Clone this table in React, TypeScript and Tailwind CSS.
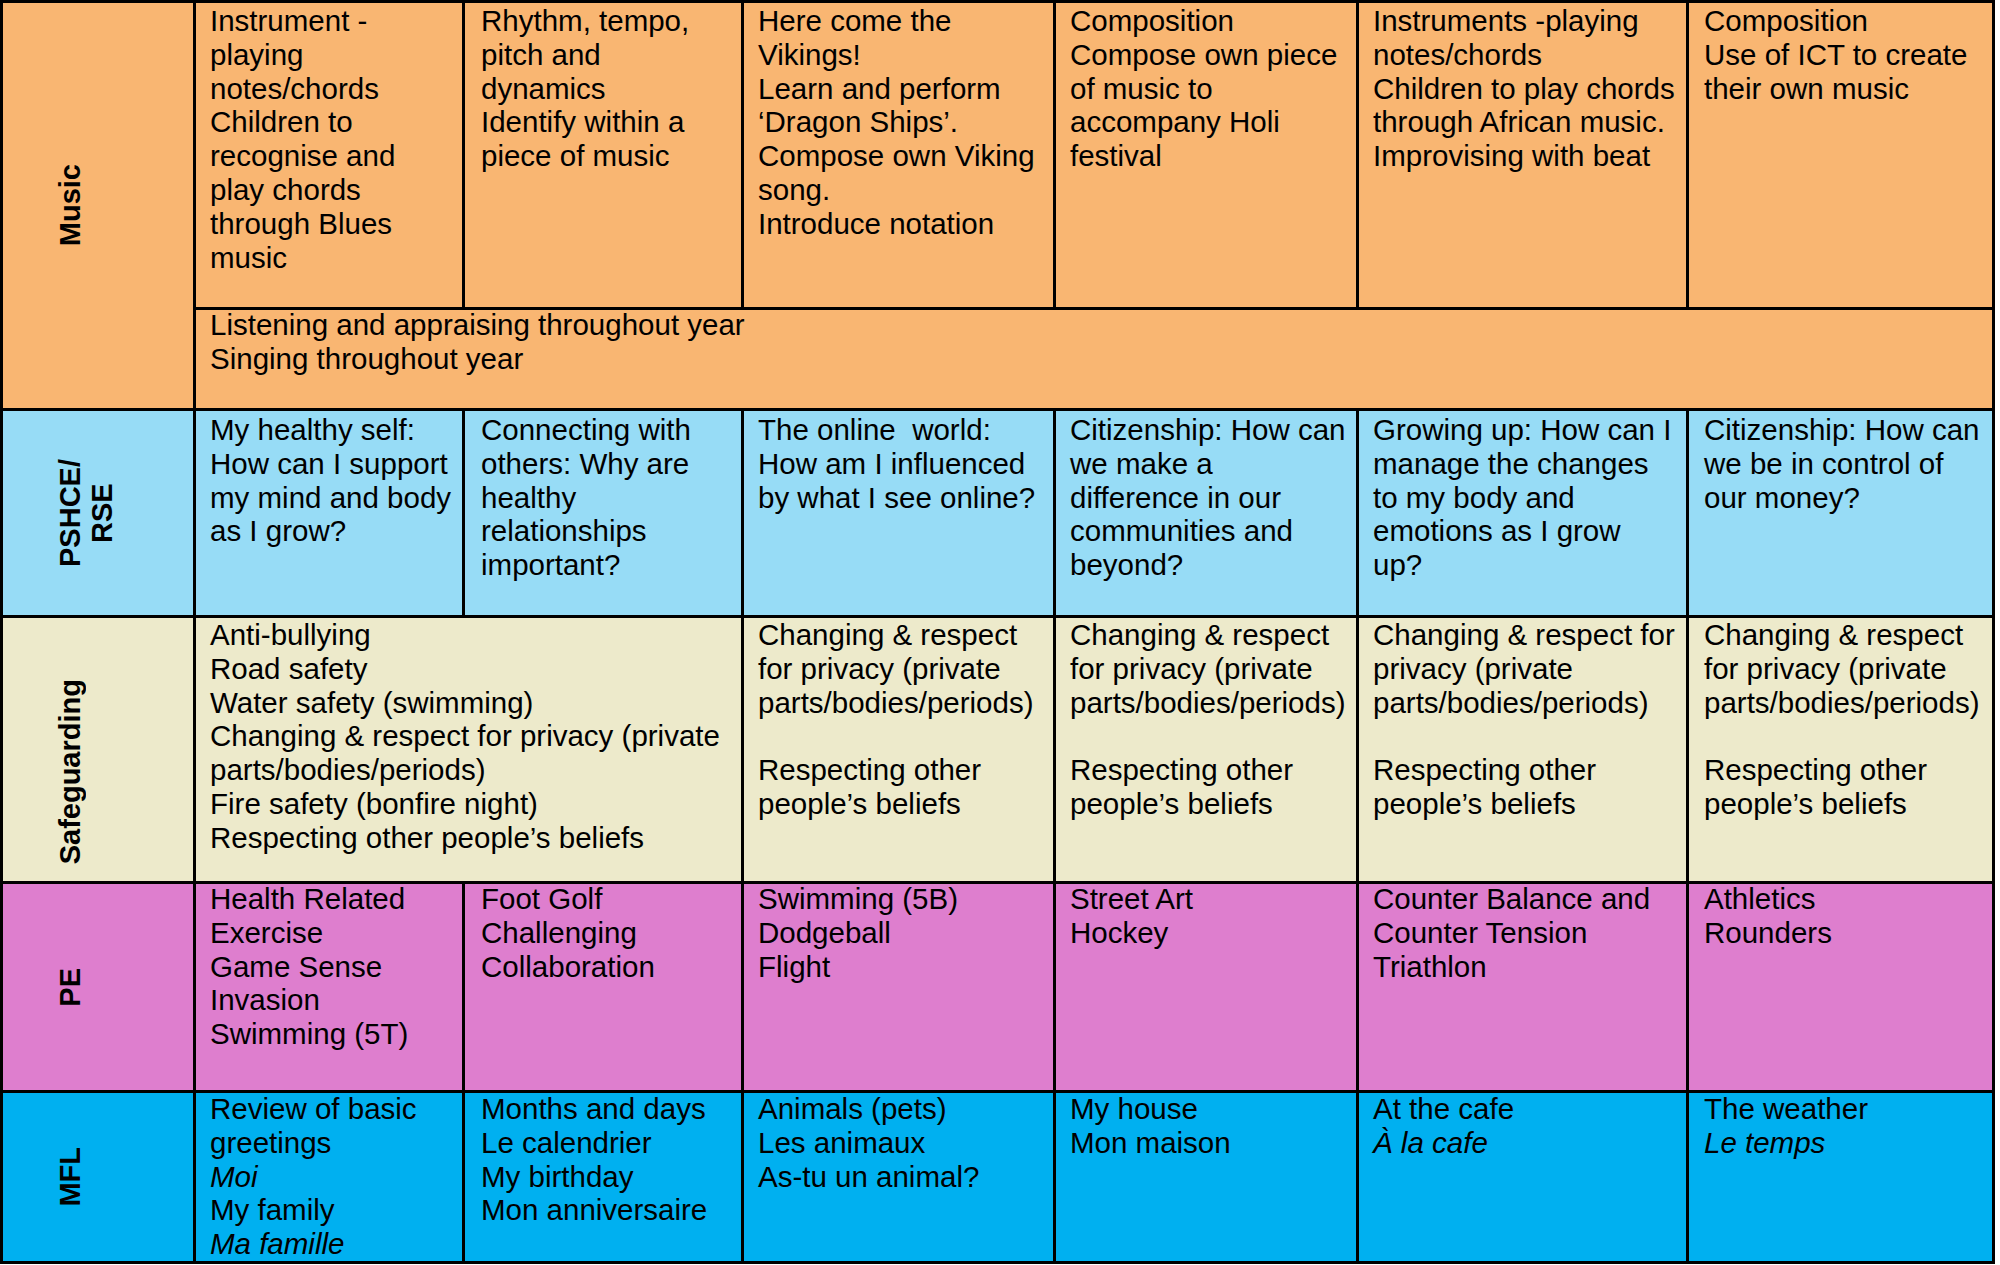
import React from 'react';

// '*' at the start of a line = italic, '' = blank line
type Lines = string[];

interface Row {
  label: string[];
  bg: string;
  labelPad?: string;
  textPad: string;
  cells: { lines: Lines; span?: number }[];
  extra?: Lines;
}

const rows: Row[] = [
  {
    label: ['Music'],
    bg: 'bg-[#f9b672]',
    textPad: 'pt-px',
    cells: [
      { lines: ['Instrument -', 'playing', 'notes/chords', 'Children to', 'recognise and', 'play chords', 'through Blues', 'music'] },
      { lines: ['Rhythm, tempo,', 'pitch and', 'dynamics', 'Identify within a', 'piece of music'] },
      { lines: ['Here come the', 'Vikings!', 'Learn and perform', '‘Dragon Ships’.', 'Compose own Viking', 'song.', 'Introduce notation'] },
      { lines: ['Composition', 'Compose own piece', 'of music to', 'accompany Holi', 'festival'] },
      { lines: ['Instruments -playing', 'notes/chords', 'Children to play chords', 'through African music.', 'Improvising with beat'] },
      { lines: ['Composition', 'Use of ICT to create', 'their own music'] },
    ],
    extra: ['Listening and appraising throughout year', 'Singing throughout year'],
  },
  {
    label: ['PSHCE/', 'RSE'],
    bg: 'bg-[#97dcf6]',
    textPad: 'pt-[2px]',
    cells: [
      { lines: ['My healthy self:', 'How can I support', 'my mind and body', 'as I grow?'] },
      { lines: ['Connecting with', 'others: Why are', 'healthy', 'relationships', 'important?'] },
      { lines: ['The online  world:', 'How am I influenced', 'by what I see online?'] },
      { lines: ['Citizenship: How can', 'we make a', 'difference in our', 'communities and', 'beyond?'] },
      { lines: ['Growing up: How can I', 'manage the changes', 'to my body and', 'emotions as I grow', 'up?'] },
      { lines: ['Citizenship: How can', 'we be in control of', 'our money?'] },
    ],
  },
  {
    label: ['Safeguarding'],
    bg: 'bg-[#edeacb]',
    labelPad: 'pt-[44px]',
    textPad: 'pt-0',
    cells: [
      {
        span: 2,
        lines: [
          'Anti-bullying',
          'Road safety',
          'Water safety (swimming)',
          'Changing & respect for privacy (private',
          'parts/bodies/periods)',
          'Fire safety (bonfire night)',
          'Respecting other people’s beliefs',
        ],
      },
      { lines: ['Changing & respect', 'for privacy (private', 'parts/bodies/periods)', '', 'Respecting other', 'people’s beliefs'] },
      { lines: ['Changing & respect', 'for privacy (private', 'parts/bodies/periods)', '', 'Respecting other', 'people’s beliefs'] },
      { lines: ['Changing & respect for', 'privacy (private', 'parts/bodies/periods)', '', 'Respecting other', 'people’s beliefs'] },
      { lines: ['Changing & respect', 'for privacy (private', 'parts/bodies/periods)', '', 'Respecting other', 'people’s beliefs'] },
    ],
  },
  {
    label: ['PE'],
    bg: 'bg-[#de7ece]',
    textPad: '-mt-[2px]',
    cells: [
      { lines: ['Health Related', 'Exercise', 'Game Sense', 'Invasion', 'Swimming (5T)'] },
      { lines: ['Foot Golf', 'Challenging', 'Collaboration'] },
      { lines: ['Swimming (5B)', 'Dodgeball', 'Flight'] },
      { lines: ['Street Art', 'Hockey'] },
      { lines: ['Counter Balance and', 'Counter Tension', 'Triathlon'] },
      { lines: ['Athletics', 'Rounders'] },
    ],
  },
  {
    label: ['MFL'],
    bg: 'bg-[#00b0f0]',
    textPad: '-mt-px',
    cells: [
      { lines: ['Review of basic', 'greetings', '*Moi', 'My family', '*Ma famille'] },
      { lines: ['Months and days', 'Le calendrier', 'My birthday', 'Mon anniversaire'] },
      { lines: ['Animals (pets)', 'Les animaux', 'As-tu un animal?'] },
      { lines: ['My house', 'Mon maison'] },
      { lines: ['At the cafe', '*À la cafe'] },
      { lines: ['The weather', '*Le temps'] },
    ],
  },
];

// small per-column nudges of the left inset (by grid column, not by cell index)
const colPad = ['pl-[14px]', 'pl-[16px]', 'pl-[14px]', 'pl-[14px]', 'pl-[14px]', 'pl-[15px]'];

const CellText = ({ lines, className }: { lines: Lines; className: string }) => (
  <div className={className}>
    {lines.map((l, i) =>
      l === '' ? (
        <div key={i}>&nbsp;</div>
      ) : l.startsWith('*') ? (
        <div key={i} className="italic whitespace-pre">{l.slice(1)}</div>
      ) : (
        <div key={i} className="whitespace-pre">{l}</div>
      )
    )}
  </div>
);

const Label = ({ label, className }: { label: string[]; className: string }) => (
  <div className={`flex items-center pl-[51px] ${className}`}>
    <div className="[writing-mode:vertical-rl] rotate-180 text-center text-[29px] font-bold leading-[32px]">
      {label.map((l, i) => (
        <div key={i}>{l}</div>
      ))}
    </div>
  </div>
);

export default function App() {
  return (
    <div className="min-h-screen bg-white font-['Liberation_Sans',Arial,sans-serif] text-black">
      <div className="grid w-fit grid-cols-[190px_266px_276px_309px_300px_327px_303px] grid-rows-[304px_98px_204px_263px_206px_168px] gap-[3px] bg-black p-[3px] text-[29.5px] leading-[33.8px]">
        {rows.map((row) => {
          let col = 0;
          return (
            <React.Fragment key={row.label.join('')}>
              <Label label={row.label} className={`${row.bg} ${row.labelPad ?? ''} ${row.extra ? 'row-span-2' : ''}`} />
              {row.cells.map((c, i) => {
                const pad = colPad[col];
                col += c.span ?? 1;
                return (
                  <div key={i} className={`${row.bg} ${c.span === 2 ? 'col-span-2' : ''}`}>
                    <CellText lines={c.lines} className={`${pad} ${row.textPad}`} />
                  </div>
                );
              })}
              {row.extra && (
                <div className={`${row.bg} col-span-6`}>
                  <CellText lines={row.extra} className="pl-[14px] -mt-[2px]" />
                </div>
              )}
            </React.Fragment>
          );
        })}
      </div>
    </div>
  );
}
